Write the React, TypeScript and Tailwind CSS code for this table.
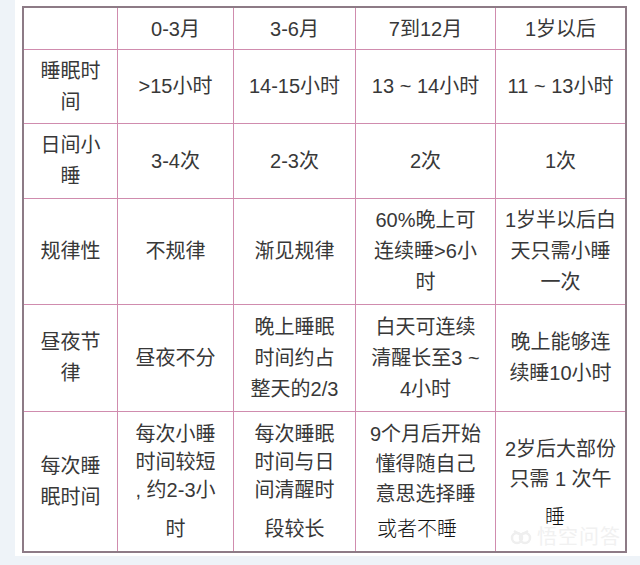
type Cell = { lines: string[]; className?: string };

const header = ["", "0-3月", "3-6月", "7到12月", "1岁以后"];

const rows: string[][][] = [
  [["睡眠时", "间"], [">15小时"], ["14-15小时"], ["13 ~ 14小时"], ["11 ~ 13小时"]],
  [["日间小", "睡"], ["3-4次"], ["2-3次"], ["2次"], ["1次"]],
  [["规律性"], ["不规律"], ["渐见规律"], ["60%晚上可", "连续睡>6小", "时"], ["1岁半以后白", "天只需小睡", "一次"]],
  [["昼夜节", "律"], ["昼夜不分"], ["晚上睡眠", "时间约占", "整天的2/3"], ["白天可连续", "清醒长至3 ~", "4小时"], ["晚上能够连", "续睡10小时"]],
];

function TextCell({ lines }: Cell) {
  return (
    <div className="bg-white flex flex-col items-center justify-center text-center leading-[31px] text-[#383838]">
      {lines.map((l, i) => (
        <span key={i} className="whitespace-nowrap">
          {l}
        </span>
      ))}
    </div>
  );
}

function Watermark() {
  return (
    <div className="absolute right-[4px] bottom-[2px] flex items-center gap-[4px] text-[#f1f1f1] text-[20px] leading-[24px] pointer-events-none">
      <svg width="24" height="20" viewBox="0 0 24 20" fill="none" stroke="#efefef" strokeWidth="2.5">
        <circle cx="8" cy="11" r="5" />
        <circle cx="16" cy="11" r="5" />
        <path d="M5 4 L12 8 L19 4" />
      </svg>
      <span className="tracking-[1px]">悟空问答</span>
    </div>
  );
}

export default function App() {
  return (
    <div
      className="w-[640px] h-[565px] bg-[#eef3f8] overflow-hidden"
      style={{ fontFamily: '"Liberation Sans", "Noto Sans CJK SC", sans-serif' }}
    >
      <div className="ml-[15px] h-[556px] bg-white pl-[7px] pt-[6px] pr-[13px]">
        <div className="relative border-2 border-[#8d7b86] bg-[#d08cae] grid grid-cols-[93px_115px_121px_139px_129px] grid-rows-[41px_73px_74px_105px_106px_139px] gap-px text-[20px] w-[605px]">
          {header.map((h, i) => (
            <div key={i} className="bg-white flex items-center justify-center text-[#383838] whitespace-nowrap">
              {h}
            </div>
          ))}
          {rows.map((r, ri) =>
            r.map((c, ci) => <TextCell key={`${ri}-${ci}`} lines={c} />)
          )}

          {/* last row: lines laid out by hand, as in the edited source image */}
          <TextCell lines={["每次睡", "眠时间"]} />
          <div className="bg-white flex flex-col items-center justify-center text-center leading-[28px] text-[#383838]">
            <span className="whitespace-nowrap">每次小睡</span>
            <span className="whitespace-nowrap">时间较短</span>
            <span className="whitespace-nowrap">, 约2-3小</span>
            <span className="whitespace-nowrap mt-[11px]">时</span>
          </div>
          <div className="bg-white flex flex-col items-center justify-center text-center leading-[28px] text-[#383838]">
            <span className="whitespace-nowrap">每次睡眠</span>
            <span className="whitespace-nowrap">时间与日</span>
            <span className="whitespace-nowrap">间清醒时</span>
            <span className="whitespace-nowrap mt-[11px]">段较长</span>
          </div>
          <div className="bg-white flex flex-col justify-center leading-[30px] text-[#383838]">
            <span className="whitespace-nowrap text-center">9个月后开始</span>
            <span className="whitespace-nowrap text-center">懂得随自己</span>
            <span className="whitespace-nowrap text-center">意思选择睡</span>
            <span className="whitespace-nowrap mt-[5px] pl-[21px] text-[#111] font-light">或者不睡</span>
          </div>
          <div className="bg-white flex flex-col justify-start pt-[22px] leading-[30px] text-[#383838]">
            <span className="whitespace-nowrap text-center">2岁后大部份</span>
            <span className="whitespace-nowrap text-center">只需 1 次午</span>
            <span className="whitespace-nowrap mt-[8px] pl-[49px] text-[#111] font-light">睡</span>
          </div>
          <Watermark />
        </div>
      </div>
    </div>
  );
}
